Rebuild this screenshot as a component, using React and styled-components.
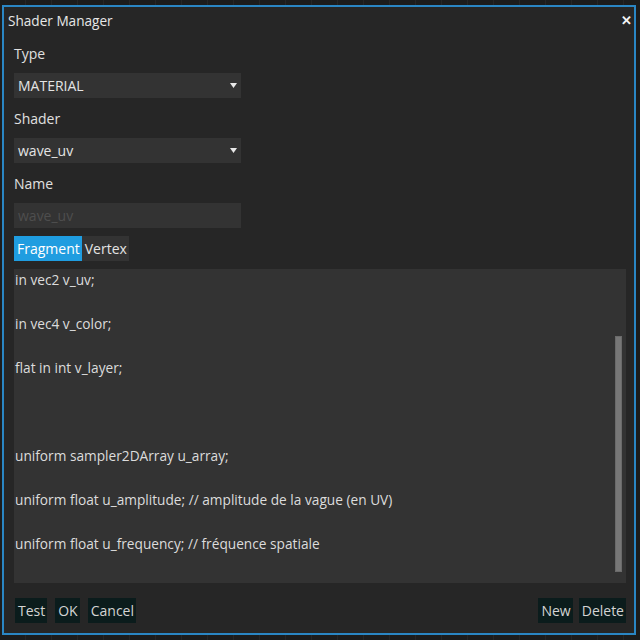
import React from 'react';
import styled, { createGlobalStyle } from 'styled-components';

const GlobalStyle = createGlobalStyle`
    html, body {
        margin: 0;
        padding: 0;
        background: #1c1c1c;
    }

    * {
        box-sizing: border-box;
    }
`;

const codeLines = [
    'in vec2  v_uv;',
    '',
    'in vec4  v_color;',
    '',
    'flat in int v_layer;',
    '',
    '',
    '',
    'uniform sampler2DArray u_array;',
    '',
    'uniform float u_amplitude;   // amplitude de la vague (en UV)',
    '',
    'uniform float u_frequency;   // fréquence spatiale',
    '',
];

const Caret = () => (
    <svg width="7" height="5" viewBox="0 0 7 5">
        <path d="M0 0 L7 0 L3.5 5 Z" fill="#e8e8e8" />
    </svg>
);

const SelectField = ({ value }) => (
    <Select>
        <span>{value}</span>
        <Caret />
    </Select>
);

const App = () => {
    return (
        <>
            <GlobalStyle />
            <Page>
                <Dialog>
                    <TitleBar>
                        <span>Shader Manager</span>
                        <Close>✕</Close>
                    </TitleBar>

                    <Body>
                        <Label>Type</Label>
                        <SelectField value="MATERIAL" />

                        <Label>Shader</Label>
                        <SelectField value="wave_uv" />

                        <Label>Name</Label>
                        <NameInput>wave_uv</NameInput>

                        <Tabs>
                            <Tab active>Fragment</Tab>
                            <Tab>Vertex</Tab>
                        </Tabs>

                        <CodeBox>
                            <Code>
                                {codeLines.map((line, i) => (
                                    <CodeLine key={i}>{line || '\u00a0'}</CodeLine>
                                ))}
                            </Code>
                            <Rail>
                                <Thumb />
                            </Rail>
                        </CodeBox>

                        <Footer>
                            <ButtonGroup>
                                <Button>Test</Button>
                                <Button>OK</Button>
                                <Button>Cancel</Button>
                            </ButtonGroup>
                            <ButtonGroup gap="6px">
                                <Button>New</Button>
                                <Button>Delete</Button>
                            </ButtonGroup>
                        </Footer>
                    </Body>
                </Dialog>
            </Page>
        </>
    );
};

const Page = styled.div`
    width: 640px;
    height: 640px;
    padding: 5px 4px 5px 2px;
    background-color: #1c1c1c;
    background-image: repeating-linear-gradient(
        90deg,
        transparent 0,
        transparent 25px,
        #262626 25px,
        #262626 26px
    );
    font-family: "Open Sans", "Noto Sans", sans-serif;
`;

const Dialog = styled.div`
    height: 100%;
    display: flex;
    flex-direction: column;
    background: #262626;
    border: 2px solid #2a86c4;
`;

const TitleBar = styled.div`
    height: 26px;
    display: flex;
    align-items: center;
    justify-content: space-between;
    padding: 0 2px 0 4px;
    color: #e6e6e6;
    font-size: 13.6px;
`;

const Close = styled.span`
    font-size: 13px;
    font-weight: bold;
    color: #f4f4f4;
`;

const Body = styled.div`
    flex: 1;
    display: flex;
    flex-direction: column;
    padding: 0 8px 10px 10px;
`;

const Label = styled.div`
    height: 20px;
    line-height: 20px;
    margin: 11px 0 9px;
    color: #e0e0e0;
    font-size: 14px;
`;

const Select = styled.div`
    width: 227px;
    height: 25px;
    display: flex;
    align-items: center;
    justify-content: space-between;
    padding: 0 4px 0 4px;
    background: #333333;
    color: #e4e4e4;
    font-size: 14px;
`;

const NameInput = styled.div`
    width: 227px;
    height: 25px;
    line-height: 25px;
    padding: 0 4px;
    background: #333333;
    color: #4e4e4e;
    font-size: 14px;
`;

const Tabs = styled.div`
    display: flex;
    margin-top: 8px;
`;

const Tab = styled.div`
    height: 25px;
    line-height: 25px;
    padding: 0 2px 0 3px;
    background: ${props => (props.active ? '#1f9de0' : '#333333')};
    color: ${props => (props.active ? '#ffffff' : '#e4e4e4')};
    font-size: 14px;
`;

const CodeBox = styled.div`
    height: 314px;
    margin-top: 8px;
    display: flex;
    background: #333333;
    overflow: hidden;
`;

const Code = styled.div`
    flex: 1;
    padding-left: 1px;
    color: #dcdcdc;
    font-size: 13.7px;
    line-height: 22px;
`;

const CodeLine = styled.div`
    height: 22px;
    white-space: nowrap;
`;

const Rail = styled.div`
    width: 13px;
    padding: 67px 4px 11px 2px;
    display: flex;
`;

const Thumb = styled.div`
    flex: 1;
    background: #777777;
    border: 1px solid #6a6a6a;
`;

const Footer = styled.div`
    display: flex;
    justify-content: space-between;
    margin-top: 15px;
`;

const ButtonGroup = styled.div`
    display: flex;
    gap: ${props => props.gap || '8px'};
    padding-left: 1px;
`;

const Button = styled.div`
    height: 25px;
    line-height: 25px;
    padding: 0 2px 0 3px;
    background: #0b1c1c;
    color: #d4d4d4;
    font-size: 14px;
`;

export default App;
